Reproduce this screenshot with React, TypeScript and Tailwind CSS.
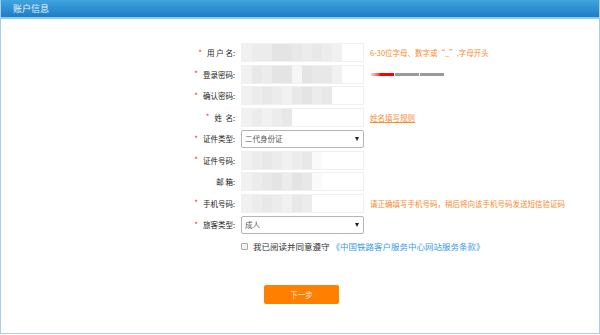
import React from 'react'

const font = { fontFamily: '"Noto Sans CJK SC", "Noto Sans", sans-serif' }

// mosaic tiles standing in for the blurred input values
function Mosaic({ tiles }: { tiles: string[] }) {
  return (
    <div className="flex h-[19px] w-[123px] items-stretch border border-[#f0f0f0] bg-white">
      {tiles.map((c, i) => (
        <div key={i} className="w-[10px] shrink-0" style={{ background: c }} />
      ))}
    </div>
  )
}

function Label({ text, star = true }: { text: string; star?: boolean }) {
  return (
    <div className="flex w-[234px] shrink-0 items-center justify-end text-[#222]">
      {star && <span className="mr-[5px] text-[8px] text-[#f0304a]">*</span>}
      <span className="whitespace-pre">{text}</span>
    </div>
  )
}

function Select({ value }: { value: string }) {
  return (
    <div className="flex h-[18px] w-[123px] items-center justify-between rounded-[2px] border border-[#b5b5b5] bg-white pl-[3px] pr-[4px] text-[#555]">
      <span>{value}</span>
      <span className="h-0 w-0 border-x-[2.5px] border-t-[4px] border-x-transparent border-t-[#222]" />
    </div>
  )
}

const g1 = '#ececec'
const g2 = '#e4e4e4'
const g3 = '#f1f1f1'
const g4 = '#e8e8e8'

export default function App() {
  return (
    <div className="h-[335px] w-[600px] bg-white text-[7.5px] leading-none" style={font}>
      <div className="flex h-[334px] flex-col border border-t-0 border-[#a9cdec]">
        {/* Header */}
        <div className="flex h-[17px] items-center bg-gradient-to-b from-[#3fa4de] to-[#1e7cc4] pl-[12px] text-[9px] text-[#e6f2fb]">
          账户信息
        </div>
        <div className="h-[2px] bg-[#86cdf0]" />

        {/* Form */}
        <div className="flex flex-col pt-[23px]">
          <div className="flex h-[21.5px] items-center">
            <Label text="用 户 名:" />
            <div className="ml-[6px]">
              <Mosaic tiles={[g3, g1, g1, g2, g2, g4, g1, g4, g1, g3, '#fff', '#fff']} />
            </div>
            <span className="ml-[6px] text-[#f98a2c]">6-30位字母、数字或“_”,字母开头</span>
          </div>

          <div className="flex h-[21.5px] items-center">
            <Label text="登录密码:" />
            <div className="ml-[6px]">
              <Mosaic tiles={[g3, g4, g1, g2, g2, '#f6f6f6', g2, g4, g4, g3, '#fff', '#fff']} />
            </div>
            <div className="ml-[7px] flex h-[3px] gap-[1px]">
              <div className="w-[23px] bg-gradient-to-r from-[#ffd0d0] to-[#ff0000] to-40%" />
              <div className="w-[24px] bg-[#9a9a9a]" />
              <div className="w-[24px] bg-[#9a9a9a]" />
            </div>
          </div>

          <div className="flex h-[21.5px] items-center">
            <Label text="确认密码:" />
            <div className="ml-[6px]">
              <Mosaic tiles={[g3, g1, g4, g1, g3, g4, g2, g1, g4, '#fff', '#fff', '#fff']} />
            </div>
          </div>

          <div className="flex h-[21.5px] items-center">
            <Label text="姓  名:" />
            <div className="ml-[6px]">
              <Mosaic tiles={[g3, g1, g3, g1, g4, '#fff', '#fff', '#fff', '#fff', '#fff', '#fff', '#fff']} />
            </div>
            <span className="ml-[6px] text-[#f98a2c] underline">姓名填写规则</span>
          </div>

          <div className="flex h-[21.5px] items-center">
            <Label text="证件类型:" />
            <div className="ml-[6px]">
              <Select value="二代身份证" />
            </div>
          </div>

          <div className="flex h-[21.5px] items-center">
            <Label text="证件号码:" />
            <div className="ml-[6px]">
              <Mosaic tiles={[g3, g1, g4, g1, g3, g1, g4, '#fafafa', '#fff', '#fff', '#fff', '#fff']} />
            </div>
          </div>

          <div className="flex h-[21.5px] items-center">
            <Label text="邮 箱:" star={false} />
            <div className="ml-[6px]">
              <Mosaic tiles={[g3, g1, g4, g2, g1, g2, g4, '#fafafa', '#fff', '#fff', '#fff', '#fff']} />
            </div>
          </div>

          <div className="flex h-[21.5px] items-center">
            <Label text="手机号码:" />
            <div className="ml-[6px]">
              <Mosaic tiles={[g3, g1, g4, g1, g3, g4, g1, '#fff', '#fff', '#fff', '#fff', '#fff']} />
            </div>
            <span className="ml-[6px] text-[#f98a2c]">请正确填写手机号码，稍后将向该手机号码发送短信验证码</span>
          </div>

          <div className="flex h-[21.5px] items-center">
            <Label text="旅客类型:" />
            <div className="ml-[6px]">
              <Select value="成人" />
            </div>
          </div>

          <div className="flex h-[21.5px] items-center pl-[240px] text-[8.5px]">
            <div className="h-[7px] w-[7px] rounded-[1px] border border-[#aaa] bg-[#f4f4f4]" />
            <span className="ml-[5px] text-[#333]">我已阅读并同意遵守</span>
            <span className="ml-[2px] text-[#3c9be8]">《中国铁路客户服务中心网站服务条款》</span>
          </div>

          <div className="flex pl-[263px] pt-[28px]">
            <button className="flex h-[19px] w-[75px] items-center justify-center rounded-[2px] bg-[#ff8000] text-[7.5px] text-[#fff3e6]">
              下一步
            </button>
          </div>
        </div>
      </div>
    </div>
  )
}
